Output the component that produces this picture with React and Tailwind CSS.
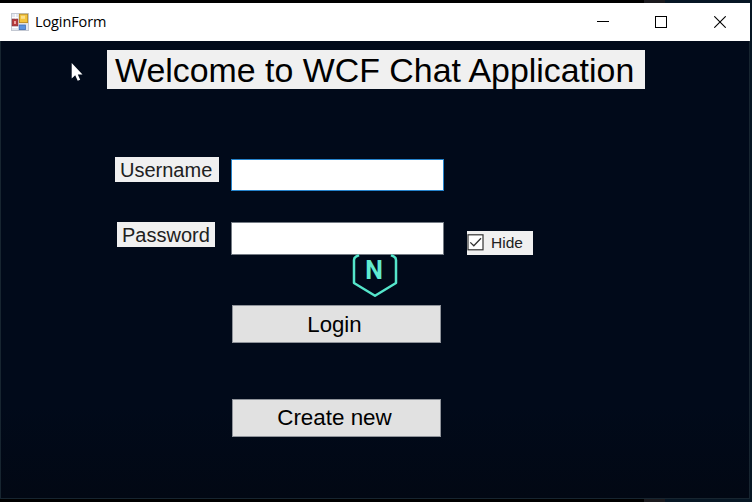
function FormIcon() {
  return (
    <svg width="18" height="18" viewBox="0 0 18 18" className="shrink-0">
      <rect x="0.5" y="0.5" width="17" height="17" fill="#e4e7ee" stroke="#c3c8d2" />
      <path d="M1 4.5h6M1 14.5h6M4.5 1v5M14.5 12v5" stroke="#fff" />
      <rect x="1.2" y="6.2" width="5.6" height="6.6" fill="#b8383a" stroke="#8f2b30" strokeWidth="0.8" />
      <rect x="3" y="8" width="2" height="3" fill="#eba3a0" />
      <rect x="8.4" y="1.2" width="8.2" height="8.4" fill="#f3c33c" stroke="#b98a1c" strokeWidth="0.9" />
      <rect x="10" y="2.8" width="4" height="3" fill="#fbe08a" />
      <rect x="8.2" y="12" width="6.2" height="4.6" fill="#5a93e0" stroke="#3c6cb4" strokeWidth="0.8" />
    </svg>
  );
}

function TitleBar() {
  return (
    <header className="flex h-[38px] items-center bg-white pl-[11px] text-black">
      <FormIcon />
      <span className="ml-[6px] w-[400px] whitespace-nowrap font-['Open_Sans','Noto_Sans',sans-serif] text-[14.5px] leading-[20px] tracking-[-0.1px]">
        LoginForm
      </span>
      <div className="ml-auto flex items-center pr-[24px]">
        <svg width="12" height="12" className="mr-[46px]" shapeRendering="crispEdges">
          <path d="M0 5.5h12" stroke="#000" />
        </svg>
        <svg width="12" height="12" className="mr-[47px]" shapeRendering="crispEdges">
          <rect x="0.5" y="0.5" width="11" height="11" fill="none" stroke="#000" />
        </svg>
        <svg width="12" height="12">
          <path d="M0.3 0.3L11.7 11.7M11.7 0.3L0.3 11.7" stroke="#000" strokeWidth="1.1" />
        </svg>
      </div>
    </header>
  );
}

function Badge() {
  return (
    <svg width="48" height="46" viewBox="0 0 48 46" className="absolute left-[350px] top-[213px]">
      <path
        d="M8 1.2L5 2.6Q3 3.7 3 6V29L24 41.8L45 29V6Q45 3.7 43 2.6L40 1.2"
        fill="none"
        stroke="#55e6cb"
        strokeWidth="2.5"
        strokeLinejoin="round"
      />
      <text x="23" y="25" textAnchor="middle" className="font-['Roboto',sans-serif] text-[25px] font-bold" fill="#62ebd0">
        N
      </text>
    </svg>
  );
}

function Pointer() {
  return (
    <svg width="12" height="18" viewBox="0 0 12 18" className="absolute left-[70px] top-[22px]">
      <path d="M0.7 0V15.5L4.2 12.3L6.7 17.8L9.2 16.8L6.8 11.4H11.5Z" fill="#fff" />
    </svg>
  );
}

export default function App() {
  return (
    <div className="h-[502px] w-[752px] overflow-hidden bg-[linear-gradient(90deg,#000_0,#000_644px,#1b1a1e_644px,#1b1a1e_665px,#061624_665px)] pt-[3px] font-['Liberation_Sans',Arial,sans-serif] text-black">
      <div className="w-[750px]">
        <TitleBar />
        <main className="relative flex h-[458px] flex-col border-x border-b border-[#172530] bg-linear-to-b from-[#010a1a] from-80% to-[#020814]">
          <h1 className="ml-[106px] mt-[9px] h-[39px] w-[538px] shrink-0 whitespace-nowrap bg-[#f0f0f0] pl-[8px] text-[33.9px] leading-[41px]">
            Welcome to WCF Chat Application
          </h1>
          <div className="ml-[114px] mt-[68px] flex h-[35px] items-start">
            <label htmlFor="username" className="h-[25px] w-[104px] bg-[#f0f0f0] pl-[5px] text-[20px] leading-[26px] text-[#202020]">
              Username
            </label>
            <input id="username" className="ml-[12px] mt-[2px] h-[32px] w-[213px] border border-solid border-[#2684cc] bg-white px-2 text-lg outline-none" />
          </div>
          <div className="ml-[116px] mt-[29px] flex h-[35px] items-start">
            <label htmlFor="password" className="mt-px h-[25px] w-[98px] bg-[#f0f0f0] pl-[5px] text-[20px] leading-[26px] text-[#202020]">
              Password
            </label>
            <input id="password" type="password" className="ml-[16px] mt-px h-[33px] w-[213px] border border-[#747b84] bg-white px-2 text-lg outline-none" />
            <div className="ml-[23px] mt-[10px] flex h-[24px] w-[66px] items-center bg-[#f0f0f0]">
              <svg width="17" height="17" viewBox="0 0 17 17" className="mb-[2px] shrink-0">
                <rect x="1" y="0.8" width="15" height="15" fill="#fff" stroke="#333" strokeWidth="1.2" />
                <path d="M3.3 8.4L6.8 11.8L14 4.2" fill="none" stroke="#333" strokeWidth="1.3" />
              </svg>
              <span className="ml-[7px] text-[15.5px] leading-[24px] text-[#202020]">Hide</span>
            </div>
          </div>
          <button className="ml-[231px] mt-[49px] h-[38px] w-[209px] shrink-0 border border-[#8f939a] bg-[#e1e1e1] pr-[4px] pt-[2px] text-[22.2px] leading-[34px]">
            Login
          </button>
          <button className="ml-[231px] mt-[56px] h-[38px] w-[209px] shrink-0 border border-[#8f939a] bg-[#e1e1e1] pr-[4px] text-[22.4px] leading-[36px]">
            Create new
          </button>
          <Badge />
          <Pointer />
        </main>
      </div>
    </div>
  );
}
